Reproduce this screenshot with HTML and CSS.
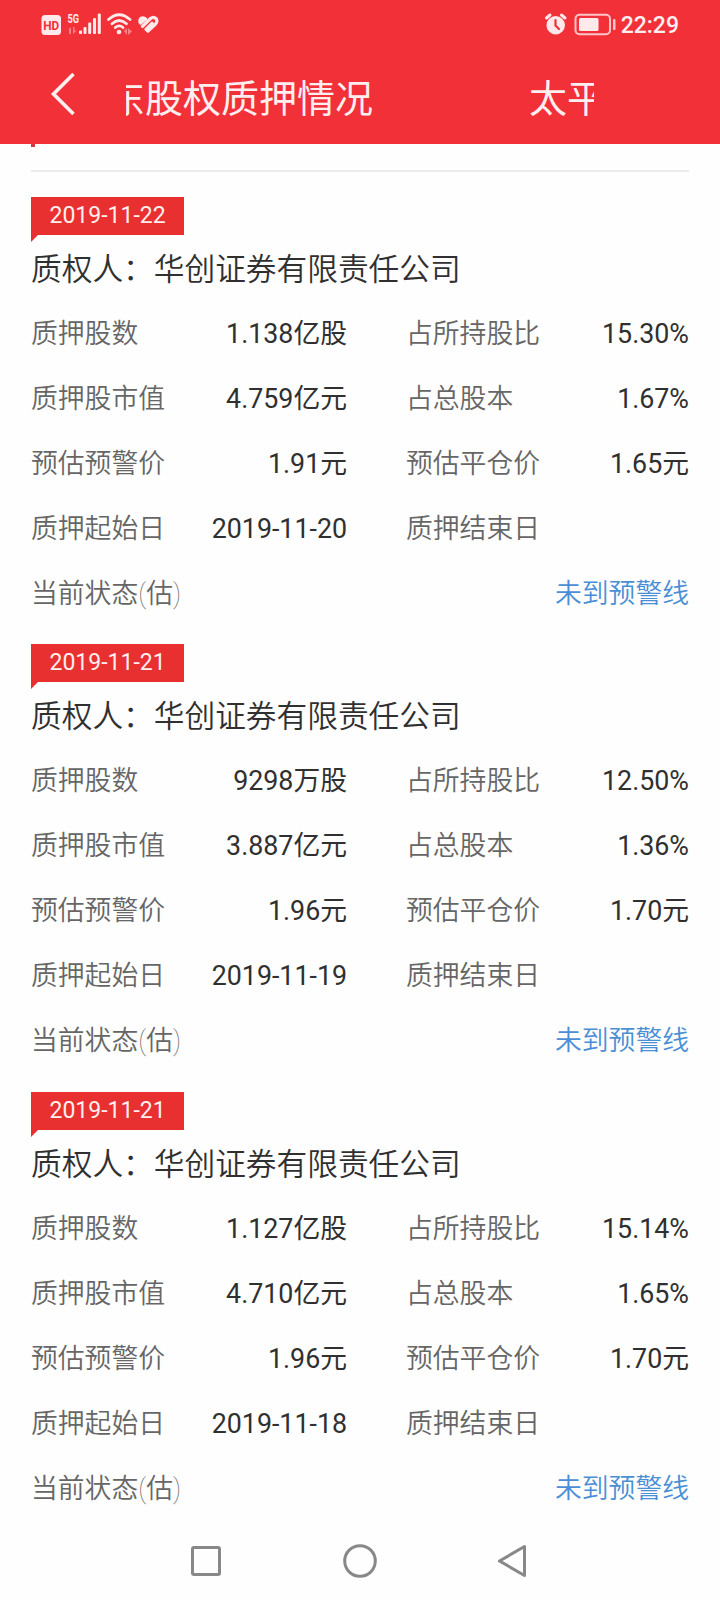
FILE: index.html
```html
<!DOCTYPE html>
<html lang="zh-CN">
<head>
    <meta charset="UTF-8">
    <meta name="viewport" content="width=device-width, initial-scale=1.0">
    <title>太平洋股东股权质押情况</title>
    <link rel="stylesheet" href="styles.css">
</head>
<body>
    <header class="header">
        <div class="status-bar">
            <svg class="status-left" width="120" height="24" viewBox="0 0 120 24">
                <rect x="1.5" y="3" width="19.5" height="20" rx="3.5" fill="#ffe9ea"/>
                <text x="3.2" y="17.6" class="hd" textLength="16" lengthAdjust="spacingAndGlyphs">HD</text>
                <text x="27.5" y="10.8" class="net" textLength="11.5" lengthAdjust="spacingAndGlyphs">5G</text>
                <g fill="#f98086">
                    <path d="M28 18l3-3v7h-2v-4zM33 15v7l3.500-3.500h-2v-3.500z"/>
                    <path d="M84 19l3-3v7zM88 16v7l4-3.500z"/>
                </g>
                <g fill="#ffe9ea">
                    <rect x="39" y="18.500" width="3" height="3.500" rx="1"/>
                    <rect x="43.500" y="15" width="3" height="7" rx="1"/>
                    <rect x="48.200" y="10.500" width="3" height="11.500" rx="1"/>
                    <rect x="53" y="6" width="3" height="16" rx="1"/>
                    <rect x="57.800" y="1.500" width="3" height="20.500" rx="1"/>
                </g>
                <g fill="none" stroke="#ffe9ea" stroke-width="2.800" stroke-linecap="round">
                    <path d="M68.500 7.500Q79 -2 90 7.500"/>
                    <path d="M72 11.700Q79 5.400 86.500 11.700"/>
                    <path d="M75.300 15.500Q79.200 12.300 83 15.500"/>
                </g>
                <circle cx="79" cy="20" r="2.300" fill="#ffe9ea"/>
                <g fill="none" stroke="#ffe9ea" stroke-linecap="round" stroke-linejoin="round">
                    <path d="M99.500 8.500Q100 5.500 103 5.500Q104.500 5.500 106 7L100.500 11.500Q99.200 10.500 99.500 8.500Z" stroke-width="2.500" fill="#ffe9ea"/>
                    <path d="M102.500 14.300L110.500 6.500Q113.500 4.200 116 6.500Q118 9.500 115.500 12L108 19.200L106 17.300L112 11.300" stroke-width="3.200"/>
                </g>
            </svg>
            <div class="status-right">
                <svg width="74" height="24" viewBox="0 0 74 24">
                    <g stroke="#ffe9ea" stroke-width="3" stroke-linecap="round">
                        <path d="M2.500 6L6 3M17.500 3L21 6"/>
                    </g>
                    <circle cx="11.700" cy="13.300" r="9.200" fill="#ffe9ea"/>
                    <path d="M11.500 8V13.500L15 17" fill="none" stroke="#f23038" stroke-width="2.200" stroke-linecap="round"/>
                    <rect x="31.500" y="2.700" width="34.500" height="19.500" rx="4" fill="none" stroke="#ffc4c7" stroke-width="2"/>
                    <rect x="35" y="6" width="19.500" height="13" rx="1.500" fill="#ffe9ea"/>
                    <rect x="69" y="7" width="2.500" height="11" rx="1" fill="#ffc4c7"/>
                </svg>
                <span class="clock">22:29</span>
            </div>
        </div>
        <div class="title-bar">
            <svg class="back" width="28" height="46" viewBox="0 0 28 46">
                <path d="M23.500 3L3.500 23L23.500 43" fill="none" stroke="#ffeeef" stroke-width="3.600"/>
            </svg>
            <div class="marquee">
                <div class="marquee-text">
                    <span>东股权质押情况</span>
                    <span>太平</span>
                </div>
            </div>
        </div>
    </header>

    <main class="content">
        <div class="section-mark"></div>

        <section class="pledge">
            <div class="date">2019-11-22</div>
            <h2 class="pledgee">质权人：华创证券有限责任公司</h2>
            <div class="row">
                <span class="label">质押股数</span><span class="value">1.138亿股</span>
                <span class="label second">占所持股比</span><span class="value">15.30%</span>
            </div>
            <div class="row">
                <span class="label">质押股市值</span><span class="value">4.759亿元</span>
                <span class="label second">占总股本</span><span class="value">1.67%</span>
            </div>
            <div class="row">
                <span class="label">预估预警价</span><span class="value">1.91元</span>
                <span class="label second">预估平仓价</span><span class="value">1.65元</span>
            </div>
            <div class="row">
                <span class="label">质押起始日</span><span class="value">2019-11-20</span>
                <span class="label second">质押结束日</span><span class="value"></span>
            </div>
            <div class="row state">
                <span class="label">当前状态<i class="paren">(</i>估<i class="paren">)</i></span><span class="safe">未到预警线</span>
            </div>
        </section>

        <section class="pledge">
            <div class="date">2019-11-21</div>
            <h2 class="pledgee">质权人：华创证券有限责任公司</h2>
            <div class="row">
                <span class="label">质押股数</span><span class="value">9298万股</span>
                <span class="label second">占所持股比</span><span class="value">12.50%</span>
            </div>
            <div class="row">
                <span class="label">质押股市值</span><span class="value">3.887亿元</span>
                <span class="label second">占总股本</span><span class="value">1.36%</span>
            </div>
            <div class="row">
                <span class="label">预估预警价</span><span class="value">1.96元</span>
                <span class="label second">预估平仓价</span><span class="value">1.70元</span>
            </div>
            <div class="row">
                <span class="label">质押起始日</span><span class="value">2019-11-19</span>
                <span class="label second">质押结束日</span><span class="value"></span>
            </div>
            <div class="row state">
                <span class="label">当前状态<i class="paren">(</i>估<i class="paren">)</i></span><span class="safe">未到预警线</span>
            </div>
        </section>

        <section class="pledge">
            <div class="date">2019-11-21</div>
            <h2 class="pledgee">质权人：华创证券有限责任公司</h2>
            <div class="row">
                <span class="label">质押股数</span><span class="value">1.127亿股</span>
                <span class="label second">占所持股比</span><span class="value">15.14%</span>
            </div>
            <div class="row">
                <span class="label">质押股市值</span><span class="value">4.710亿元</span>
                <span class="label second">占总股本</span><span class="value">1.65%</span>
            </div>
            <div class="row">
                <span class="label">预估预警价</span><span class="value">1.96元</span>
                <span class="label second">预估平仓价</span><span class="value">1.70元</span>
            </div>
            <div class="row">
                <span class="label">质押起始日</span><span class="value">2019-11-18</span>
                <span class="label second">质押结束日</span><span class="value"></span>
            </div>
            <div class="row state">
                <span class="label">当前状态<i class="paren">(</i>估<i class="paren">)</i></span><span class="safe">未到预警线</span>
            </div>
        </section>
    </main>

    <nav class="nav-bar">
        <svg width="36" height="36" viewBox="0 0 36 36"><rect x="4.500" y="4.500" width="27" height="27" rx="1.500"/></svg>
        <svg width="36" height="36" viewBox="0 0 36 36"><circle cx="18" cy="18" r="15.300"/></svg>
        <svg width="36" height="36" viewBox="0 0 36 36"><path d="M28.500 3.500V32.500L3.500 18Z"/></svg>
    </nav>
</body>
</html>
```

FILE: styles.css
```css
* {
    box-sizing: border-box;
}
body {
    margin: 0;
    width: 720px;
    height: 1600px;
    overflow: hidden;
    display: flex;
    flex-direction: column;
    background-color: #fefefe;
    color: #303030;
    font-family: Roboto, "Noto Sans CJK SC", sans-serif;
}

/* header */
.header {
    height: 144px;
    flex: none;
    background-color: #f23038;
    color: #ffeeef;
}
.status-bar {
    height: 48px;
    padding: 12px 41px 0 40px;
    display: flex;
    justify-content: space-between;
}
.status-right {
    display: flex;
    gap: 3px;
}
.hd {
    font-size: 13px;
    font-weight: 700;
    fill: #f23038;
}
.net {
    font-size: 12.5px;
    font-weight: 700;
    fill: #ffe9ea;
}
.clock {
    font-size: 23px;
    font-weight: 500;
    line-height: 27px;
}
.title-bar {
    height: 96px;
    padding: 0 126px 0 50px;
    display: flex;
    align-items: center;
}
.back {
    margin-right: 48px;
    margin-top: -4px;
    flex: none;
}
.marquee {
    flex: 1;
    overflow: hidden;
}
.marquee-text {
    display: flex;
    gap: 156px;
    margin-left: -19px;
    padding-top: 5px;
    font-size: 38px;
    line-height: 56px;
    white-space: nowrap;
}

/* content */
.content {
    flex: 1;
    padding: 0 31px;
}
.section-mark {
    height: 28px;
    margin-bottom: 25px;
    border-bottom: 2px solid #ebebeb;
}
.section-mark::before {
    content: "";
    display: block;
    width: 4px;
    height: 3px;
    background-color: #d33a40;
}
.pledge {
    margin-bottom: 18px;
}
.pledge:last-child {
    margin: 19px 0 0;
}
.date {
    position: relative;
    width: 153px;
    height: 38px;
    padding-left: 18.5px;
    background-color: #e83030;
    color: #ffeeee;
    font-size: 23px;
    line-height: 38px;
}
.date::after {
    content: "";
    position: absolute;
    left: 0;
    top: 100%;
    border-top: 7px solid #e83030;
    border-right: 7px solid transparent;
}
.pledgee {
    margin: 0;
    height: 66px;
    padding-top: 2px;
    font-size: 30.7px;
    font-weight: 350;
    line-height: 66px;
}
.row {
    height: 65px;
    display: grid;
    grid-template-columns: 140px 176px 200px 142px;
    font-size: 26.8px;
    line-height: 67px;
    white-space: nowrap;
}
.label {
    color: #666;
    font-weight: 350;
}
.second {
    padding-left: 59px;
}
.value {
    font-weight: 380;
    text-align: right;
}
.state {
    display: flex;
    justify-content: space-between;
}
.paren {
    font-style: normal;
    font-weight: 100;
}
.safe {
    color: #4a8fd6;
    font-weight: 350;
}

/* system navigation */
.nav-bar {
    height: 80px;
    flex: none;
    padding: 0 188px;
    display: flex;
    align-items: center;
    justify-content: space-between;
}
.nav-bar svg {
    fill: none;
    stroke: #888;
    stroke-width: 3;
    stroke-linejoin: round;
}
```
